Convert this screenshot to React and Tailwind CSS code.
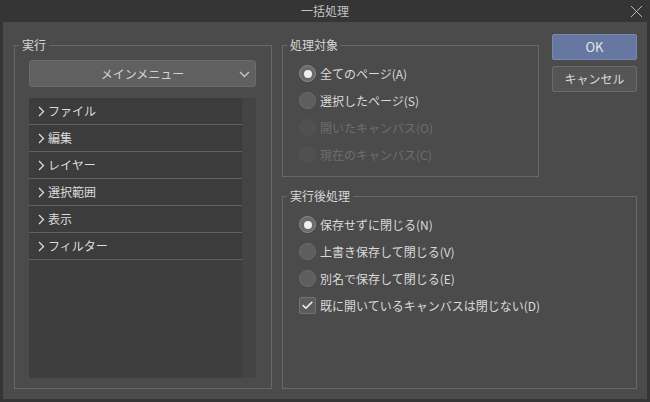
import { X, Check } from "lucide-react";

const font = { fontFamily: '"Noto Sans CJK JP", "Noto Sans", sans-serif' };

const menuItems = ["ファイル", "編集", "レイヤー", "選択範囲", "表示", "フィルター"];

function Radio({ label, checked, disabled }) {
  return (
    <div className="h-[27px] flex items-center gap-[4px]">
      <span
        className={`w-[17px] h-[17px] rounded-full flex items-center justify-center border ${
          disabled
            ? "bg-[#505050] border-[#535353]"
            : checked
            ? "bg-[#6a6a6a] border-[#8a8a8a]"
            : "bg-[#5e5e5e] border-[#6c6c6c]"
        }`}
      >
        {checked && <span className="w-[8px] h-[8px] rounded-full bg-[#f0f0f0]" />}
      </span>
      <span className={`text-[12px] ${disabled ? "text-[#6e6e6e]" : "text-[#dadada]"}`}>{label}</span>
    </div>
  );
}

// fieldset without padding so the legend sits a fixed distance from the border
function Group({ title, className = "", children }) {
  return (
    <fieldset className={`border border-[#686868] ${className}`}>
      <legend className="ml-[4px] px-[3px] text-[12px] leading-[16px] text-[#d8d8d8]">{title}</legend>
      {children}
    </fieldset>
  );
}

export default function App() {
  return (
    <div className="w-[650px] h-[402px] bg-[#353535] flex flex-col" style={font}>
      {/* Title bar */}
      <div className="h-[22px] shrink-0 flex items-center justify-center relative">
        <span className="text-[12px] text-[#c4c4c4]">一括処理</span>
        <X className="absolute right-[3px] top-[1px] w-[21px] h-[21px] text-[#bdbdbd]" strokeWidth={1.1} />
      </div>

      {/* Body */}
      <div className="flex-1 mx-[3px] mb-[3px] bg-[#4b4b4b] flex gap-[10px] pl-[11px] pr-[10px] pt-[15px] pb-[10px]">
        {/* Left */}
        <Group title="実行" className="w-[258px] flex flex-col">
          <div className="flex-1 flex flex-col pl-[14px] pr-[15px] pb-[10px]">
            <div className="mt-[7px] h-[27px] rounded-[3px] bg-[#606060] border border-[#6c6c6c] flex items-center justify-center relative">
              <span className="text-[12px] text-[#d4d4d4]">メインメニュー</span>
              <svg className="absolute right-[5px] top-[10px]" width="11" height="7" viewBox="0 0 11 7" fill="none">
                <polyline points="1,1 5.5,5.5 10,1" stroke="#c8c8c8" strokeWidth="1.3" />
              </svg>
            </div>
            <div className="mt-[11px] flex-1 bg-[#3e3e3e] flex">
              <div className="flex-1 flex flex-col">
                {menuItems.map((item) => (
                  <div key={item} className="h-[27px] border-b border-[#606060] flex items-center pl-[9px] gap-[3px] bg-[#3c3c3c]">
                    <svg width="7" height="11" viewBox="0 0 7 11" fill="none">
                      <polyline points="1,1 5.5,5.5 1,10" stroke="#dcdcdc" strokeWidth="1.3" />
                    </svg>
                    <span className="text-[12px] text-[#dcdcdc]">{item}</span>
                  </div>
                ))}
              </div>
              <div className="w-[14px] bg-[#444444]" />
            </div>
          </div>
        </Group>

        {/* Right */}
        <div className="flex-1 flex flex-col gap-[11px]">
          <div className="flex gap-[13px]">
            <Group title="処理対象" className="w-[257px]">
              <div className="pl-[16px] pt-[7px] pb-[8px]">
                <Radio label="全てのページ(A)" checked />
                <Radio label="選択したページ(S)" />
                <Radio label="開いたキャンバス(O)" disabled />
                <Radio label="現在のキャンバス(C)" disabled />
              </div>
            </Group>
            <div className="flex-1 flex flex-col gap-[6px] -mt-[3px]">
              <button className="h-[26px] bg-[#6677a1] border border-[#7888b0] rounded-[2px] text-[13px] text-[#e6e6e6]">OK</button>
              <button className="h-[26px] bg-[#555555] border border-[#6a6a6a] rounded-[2px] text-[12px] text-[#d8d8d8]">キャンセル</button>
            </div>
          </div>
          <Group title="実行後処理" className="flex-1">
            <div className="pl-[16px] pt-[7px]">
              <Radio label="保存せずに閉じる(N)" checked />
              <Radio label="上書き保存して閉じる(V)" />
              <Radio label="別名で保存して閉じる(E)" />
              <div className="h-[27px] flex items-center gap-[4px]">
                <span className="w-[17px] h-[17px] rounded-[2px] bg-[#5c5c5c] border border-[#727272] flex items-center justify-center">
                  <Check className="w-[13px] h-[13px] text-[#f2f2f2]" strokeWidth={3} />
                </span>
                <span className="text-[12px] text-[#dadada]">既に開いているキャンバスは閉じない(D)</span>
              </div>
            </div>
          </Group>
        </div>
      </div>
    </div>
  );
}
